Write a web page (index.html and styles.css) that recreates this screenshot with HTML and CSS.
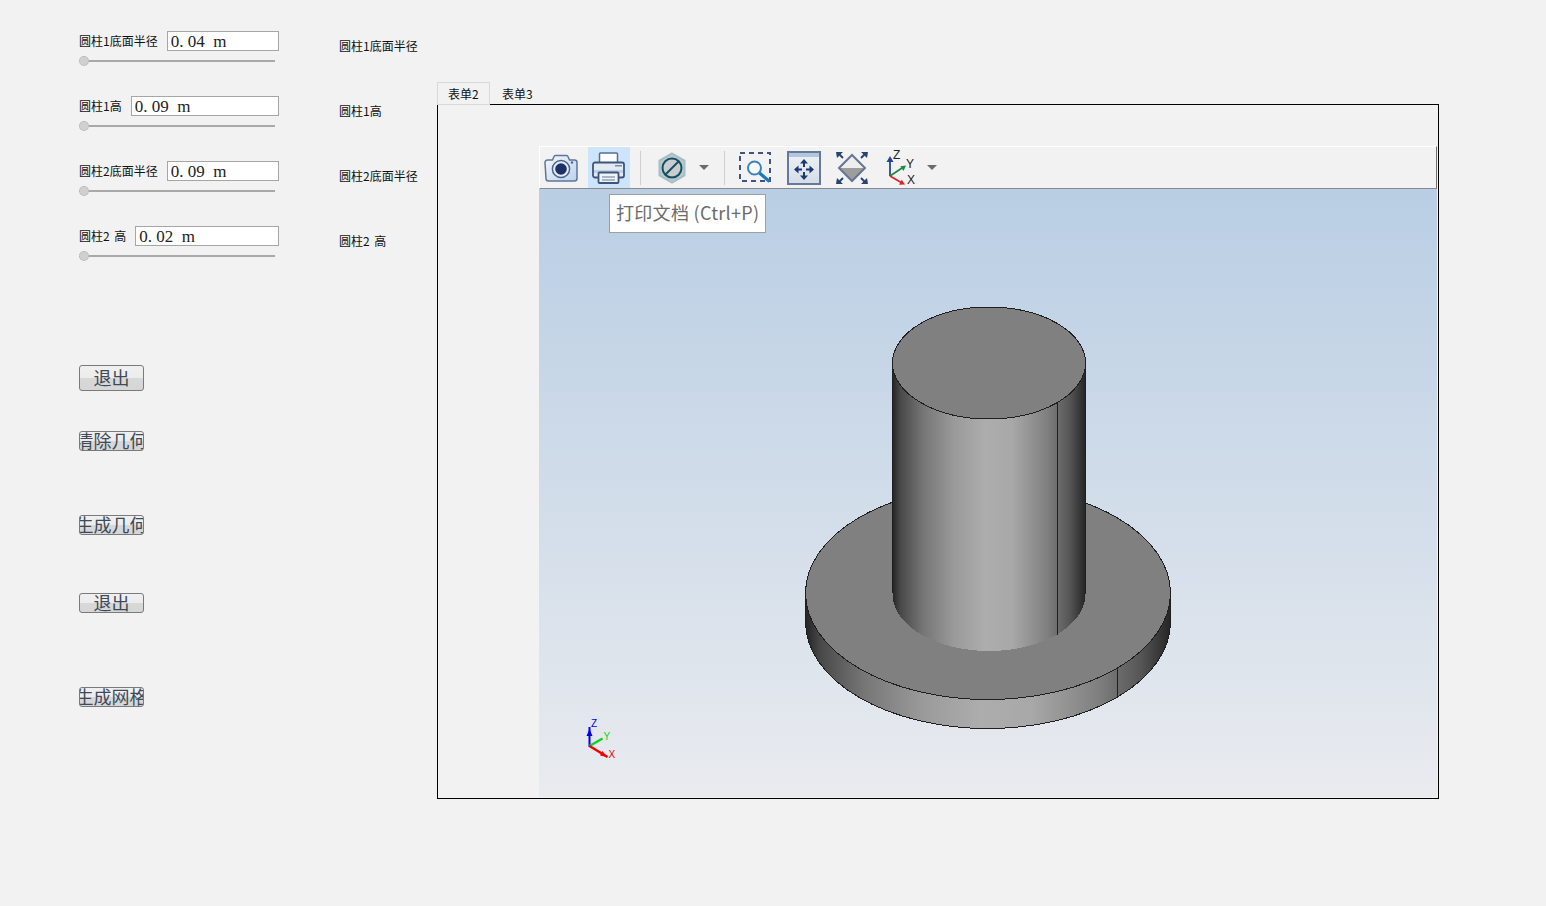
FILE: index.html
```html
<!DOCTYPE html>
<html lang="zh-CN">
<head>
<meta charset="utf-8">
<title>圆柱几何</title>
<link rel="stylesheet" href="styles.css">
</head>
<body>
<div class="app">
  <section class="controls">
    <div class="param">
      <div class="param-row"><span class="param-label">圆柱1底面半径</span><input class="param-input" value="0. 04  m"></div>
      <div class="slider"><span class="thumb"></span><span class="track"></span></div>
    </div>
    <div class="param">
      <div class="param-row"><span class="param-label">圆柱1高</span><input class="param-input" value="0. 09  m"></div>
      <div class="slider"><span class="thumb"></span><span class="track"></span></div>
    </div>
    <div class="param">
      <div class="param-row"><span class="param-label">圆柱2底面半径</span><input class="param-input" value="0. 09  m"></div>
      <div class="slider"><span class="thumb"></span><span class="track"></span></div>
    </div>
    <div class="param">
      <div class="param-row"><span class="param-label">圆柱2 高</span><input class="param-input" value="0. 02  m"></div>
      <div class="slider"><span class="thumb"></span><span class="track"></span></div>
    </div>
    <button class="btn btn-tall btn-first"><span>退出</span></button>
    <button class="btn btn-clear"><span>清除几何</span></button>
    <button class="btn btn-gen"><span>生成几何</span></button>
    <button class="btn btn-exit"><span>退出</span></button>
    <button class="btn btn-mesh"><span>生成网格</span></button>
  </section>

  <section class="names">
    <div class="name">圆柱1底面半径</div>
    <div class="name">圆柱1高</div>
    <div class="name">圆柱2底面半径</div>
    <div class="name">圆柱2 高</div>
  </section>

  <section class="workspace">
    <div class="tabs">
      <div class="tab tab-active">表单2</div>
      <div class="tab">表单3</div>
    </div>
    <div class="panel">
      <div class="viewer">
        <div class="toolbar">
          <svg class="ic ic-camera" width="34" height="30" viewBox="0 0 34 30">
            <defs><linearGradient id="camFill" x1="0" y1="0" x2="1" y2="1"><stop offset="0" stop-color="#f4f8fc"/><stop offset="1" stop-color="#bcd3ea"/></linearGradient></defs>
            <path d="M1 9.500a2.500 2.500 0 0 1 2.500-2.500h5l1.500-3.500a1.500 1.500 0 0 1 1.300-1h11.400a1.500 1.500 0 0 1 1.300 1l1.500 3.500h5a2.500 2.500 0 0 1 2.500 2.500v16a2.500 2.500 0 0 1-2.500 2.500h-26a2.500 2.500 0 0 1-2.500-2.500z" fill="url(#camFill)" stroke="#5f7699" stroke-width="1.500"/>
            <circle cx="17" cy="16" r="8.600" fill="#e4edf6" stroke="#4c648d" stroke-width="1.500"/>
            <circle cx="17" cy="16" r="5.800" fill="#1b3168"/>
            <circle cx="28" cy="9.500" r="1.200" fill="#51698f"/>
          </svg>
          <div class="print-btn">
            <svg width="34" height="32" viewBox="0 0 34 32">
              <rect x="7.500" y="1" width="18" height="10" rx="1" fill="#fbfcfe" stroke="#5a6d90" stroke-width="1.500"/>
              <path d="M3 10.500h27a2 2 0 0 1 2 2v11a2 2 0 0 1-2 2h-27a2 2 0 0 1-2-2v-11a2 2 0 0 1 2-2z" fill="#e3eaf3" stroke="#3f5479" stroke-width="1.800"/>
              <rect x="2" y="18" width="29" height="3" fill="#bfd0e4"/>
              <rect x="23" y="13" width="7" height="1.500" fill="#7b8ca8"/>
              <rect x="6.500" y="20.500" width="20" height="10.500" rx="1" fill="#eef3f9" stroke="#3f5479" stroke-width="1.800"/>
              <path d="M10 25h13M10 28h13" stroke="#93a2b8" stroke-width="1.400"/>
            </svg>
          </div>
          <span class="sep sep-one"></span>
          <svg class="ic ic-stop" width="28" height="32" viewBox="0 0 28 32">
            <path d="M14 1.500l12.500 7.200v14.600l-12.500 7.200-12.500-7.200v-14.600z" fill="#bcc8cd" stroke="#a4bfc5" stroke-width="2"/>
            <circle cx="14" cy="16" r="9.500" fill="#c9cdd0" stroke="#14505f" stroke-width="2"/>
            <path d="M7.500 22.500l13-13" stroke="#14505f" stroke-width="2"/>
          </svg>
          <span class="caret caret-one"></span>
          <span class="sep sep-two"></span>
          <svg class="ic ic-zoom" width="33" height="31" viewBox="0 0 33 31">
            <rect x="1" y="1" width="30" height="28" fill="none" stroke="#3f5580" stroke-width="2" stroke-dasharray="5 4"/>
            <circle cx="15.500" cy="16" r="6.500" fill="#f6fafd" stroke="#3a86bb" stroke-width="2"/>
            <path d="M20.500 21l10 8.500" stroke="#1b7bb8" stroke-width="3.200"/>
          </svg>
          <svg class="ic ic-pan" width="34" height="34" viewBox="0 0 34 34">
            <defs><linearGradient id="panFill" x1="0" y1="0" x2="0" y2="1"><stop offset="0" stop-color="#f0f3f7"/><stop offset="1" stop-color="#d3dce7"/></linearGradient></defs>
            <rect x="1" y="1" width="32" height="32" fill="url(#panFill)" stroke="#66799a" stroke-width="2"/>
            <rect x="2" y="2" width="30" height="4" fill="#b3c6de"/>
            <path d="M17 8l4 4.500h-3v3.500h-2v-3.500h-3zM17 29l-4-4.500h3v-3.500h2v3.500h3zM7 18.500l4.500-4v3h3.500v2h-3.500v3zM27 18.500l-4.500 4v-3h-3.500v-2h3.500v-3z" fill="#1d3a6d"/>
          </svg>
          <svg class="ic ic-fit" width="32" height="34" viewBox="0 0 32 34">
            <path d="M3 17l13-13 13 13z" fill="#eeeeee"/>
            <path d="M3 17l13 13 13-13z" fill="#9d9d9d"/>
            <path d="M3 17l13-13 13 13-13 13z" fill="none" stroke="#66768f" stroke-width="2"/>
            <path d="M0 1h7l-2.300 2.300 3 3-1.400 1.400-3-3-2.300 2.300zM32 1h-7l2.300 2.300-3 3 1.400 1.400 3-3 2.300 2.300zM0 33h7l-2.300-2.300 3-3-1.400-1.400-3 3-2.300-2.300zM32 33h-7l2.300-2.300-3-3 1.400-1.400 3 3 2.300-2.300z" fill="#2a4472"/>
          </svg>
          <svg class="ic ic-axis" width="29" height="36" viewBox="0 0 29 36">
            <g transform="translate(0 -2)">
              <path d="M3 28v-17" stroke="#24488f" stroke-width="1.800"/>
              <path d="M3 8l3.500 6h-7z" fill="#24488f"/>
              <path d="M3 28l12-8" stroke="#1c8a46" stroke-width="1.800"/>
              <path d="M19 17.500l-2.500 5.500-3.200-4.700z" fill="#1c8a46"/>
              <path d="M3 28l12 7" stroke="#e0222c" stroke-width="1.800"/>
              <path d="M18 36.500l-6 .2 2.800-5z" fill="#e0222c"/>
            </g>
            <text class="axis-letter" x="6" y="8.500">Z</text>
            <text class="axis-letter" x="19" y="17.500">Y</text>
            <text class="axis-letter" x="20" y="33.500">X</text>
          </svg>
          <span class="caret caret-two"></span>
        </div>
        <svg class="scene" viewBox="539 189 898 608" preserveAspectRatio="none">
          <defs>
            <linearGradient id="side" x1="0" y1="0" x2="1" y2="0">
              <stop offset="0" stop-color="#242424"/>
              <stop offset="0.04" stop-color="#484848"/>
              <stop offset="0.16" stop-color="#767676"/>
              <stop offset="0.32" stop-color="#9a9a9a"/>
              <stop offset="0.48" stop-color="#adadad"/>
              <stop offset="0.62" stop-color="#a8a8a8"/>
              <stop offset="0.8" stop-color="#808080"/>
              <stop offset="0.92" stop-color="#555555"/>
              <stop offset="1" stop-color="#252525"/>
            </linearGradient>
          </defs>
          <g shape-rendering="crispEdges">
            <path d="M805.500 593V622A182.500 106.500 0 0 0 1170.500 622V593Z" fill="url(#side)" stroke="#1f1f1f"/>
            <ellipse cx="988" cy="593" rx="182.500" ry="106.500" fill="#808080" stroke="#1f1f1f"/>
            <path d="M1117.500 669V698" stroke="#1f1f1f" fill="none"/>
            <path d="M892.500 363V594A96.500 57 0 0 0 1085.500 594V363Z" fill="url(#side)"/>
            <path d="M892.500 363V593M1085.500 363V594M1057.500 402V635" stroke="#1f1f1f" fill="none"/>
            <ellipse cx="989" cy="363" rx="96.500" ry="56" fill="#808080" stroke="#1f1f1f"/>
          </g>
          <g class="triad">
            <path d="M589.500 747V727" stroke="#0000e6" stroke-width="2"/>
            <path d="M589.500 729l3 7h-6z" fill="#0000e6"/>
            <path d="M589.500 746l13-7.500" stroke="#10d020" stroke-width="2.400"/>
            <path d="M589.500 746l18 11" stroke="#f00000" stroke-width="2.400"/>
            <path d="M607 757l-7-1.500 2.500-4.500z" fill="#f00000"/>
            <text class="triad-z" x="591" y="727">Z</text>
            <text class="triad-y" x="603.500" y="740">Y</text>
            <text class="triad-x" x="608.500" y="758">X</text>
          </g>
        </svg>
        <div class="tooltip">打印文档 (Ctrl+P)</div>
      </div>
    </div>
  </section>
</div>
</body>
</html>
```

FILE: styles.css
```css
html, body {
  margin: 0;
  padding: 0;
  height: 100%;
  background: #f2f2f2;
  overflow: hidden;
}

.app {
  display: flex;
  height: 906px;
  font-family: "Noto Sans CJK SC", "Liberation Sans", sans-serif;
  font-size: 12px;
  color: #111;
}

.controls {
  width: 339px;
  box-sizing: border-box;
  padding: 31px 0 0 79px;
  display: flex;
  flex-direction: column;
  align-items: flex-start;
  flex: none;
}

.param {
  height: 65px;
  width: 200px;
}

.param-row {
  display: flex;
  align-items: center;
  gap: 9px;
  height: 20px;
}

.param-label {
  white-space: pre;
  word-spacing: 2px;
  line-height: 20px;
  flex: none;
}

.param-input {
  flex: 1;
  min-width: 0;
  height: 20px;
  box-sizing: border-box;
  border: 1px solid #a6a6a6;
  background: #fff;
  padding: 2px 0 0 3px;
  font-family: "Liberation Serif", serif;
  font-size: 17px;
  color: #222;
  outline: none;
}

.slider {
  display: flex;
  align-items: center;
  width: 196px;
  height: 10px;
  margin-top: 5px;
}

.thumb {
  width: 10px;
  height: 10px;
  flex: none;
  box-sizing: border-box;
  border-radius: 50%;
  background: #d0d0d0;
  border: 1px dotted #aaa;
}

.track {
  flex: 1;
  height: 2px;
  background: #a9a9a9;
}

.btn {
  display: flex;
  justify-content: center;
  align-items: center;
  width: 65px;
  height: 20px;
  box-sizing: border-box;
  padding: 0 0 2px;
  overflow: hidden;
  border: 1px solid #7a7a7a;
  border-radius: 3px;
  background: linear-gradient(#f0f0f0 0, #ececec 48%, #d8d8d8 50%, #d6d6d6 100%);
  font-family: "Noto Sans CJK SC", sans-serif;
  font-size: 18px;
  line-height: 18px;
  color: #3d4a58;
}

.btn span {
  flex: none;
  white-space: nowrap;
}

.btn-tall { height: 26px; }
.btn-first { margin-top: 74px; }
.btn-clear { margin-top: 40px; }
.btn-gen { margin-top: 64px; }
.btn-exit { margin-top: 58px; }
.btn-mesh { margin-top: 74px; }

.names {
  width: 98px;
  flex: none;
  padding-top: 39px;
}

.name {
  height: 65px;
  line-height: 14px;
  white-space: pre;
  word-spacing: 2px;
}

.workspace {
  width: 1002px;
  flex: none;
  padding-top: 82px;
}

.tabs {
  display: flex;
  height: 22px;
  position: relative;
  z-index: 1;
}

.tab {
  height: 23px;
  box-sizing: border-box;
  padding: 0 11px;
  width: 53px;
  line-height: 21px;
  white-space: nowrap;
  border: 1px solid transparent;
  border-bottom: 0;
}

.tab-active {
  border: 1px solid #d9d9d9;
  background: #f2f2f2;
  padding: 0 10px;
}

.panel {
  height: 695px;
  box-sizing: border-box;
  border: 1px solid #000;
  padding: 41px 1px 1px 101px;
}

.viewer {
  position: relative;
  height: 100%;
  display: flex;
  flex-direction: column;
}

.toolbar {
  height: 43px;
  box-sizing: border-box;
  flex: none;
  display: flex;
  align-items: center;
  background: #f2f2f2;
  border-top: 1px solid #fff;
  border-left: 1px solid #fff;
  border-right: 1px solid #6e6e6e;
  border-bottom: 1px solid #8a8a8a;
}

.ic {
  display: block;
  flex: none;
  overflow: visible;
}

.ic-camera { margin-left: 4px; margin-right: 10px; }
.ic-stop { margin-left: 17px; }
.ic-zoom { margin-left: 14px; }
.ic-pan { margin-left: 15px; }
.ic-fit { margin-left: 15px; }
.ic-axis { margin-left: 19px; }

.print-btn {
  width: 42px;
  height: 41px;
  display: flex;
  align-items: center;
  justify-content: center;
  background: #cde4fd;
  flex: none;
}

.sep {
  width: 1px;
  height: 34px;
  background: #cfcfcf;
  flex: none;
}

.sep-one { margin-left: 10px; }
.sep-two { margin-left: 15px; }

.caret {
  width: 0;
  height: 0;
  flex: none;
  border-left: 5px solid transparent;
  border-right: 5px solid transparent;
  border-top: 5px solid #6b6b6b;
}

.caret-one { margin-left: 13px; }
.caret-two { margin-left: 11px; }

.axis-letter {
  font-family: "Liberation Sans", sans-serif;
  font-size: 12px;
  fill: #222;
}

.scene {
  display: block;
  flex: 1;
  min-height: 0;
  width: 100%;
  background: linear-gradient(#b9cee4, #e9ebef);
}

.triad text {
  font-family: "Liberation Sans", sans-serif;
  font-size: 10px;
  font-weight: 400;
}

.triad-z { fill: #0000e6; }
.triad-y { fill: #10d020; }
.triad-x { fill: #e00000; }

.tooltip {
  position: absolute;
  left: 70px;
  top: 48px;
  height: 39px;
  box-sizing: border-box;
  padding: 0 6px;
  line-height: 35px;
  letter-spacing: 0.3px;
  background: #fff;
  border: 1px solid #a0a0a0;
  font-size: 18px;
  color: #6b6b6b;
  white-space: nowrap;
}
```
